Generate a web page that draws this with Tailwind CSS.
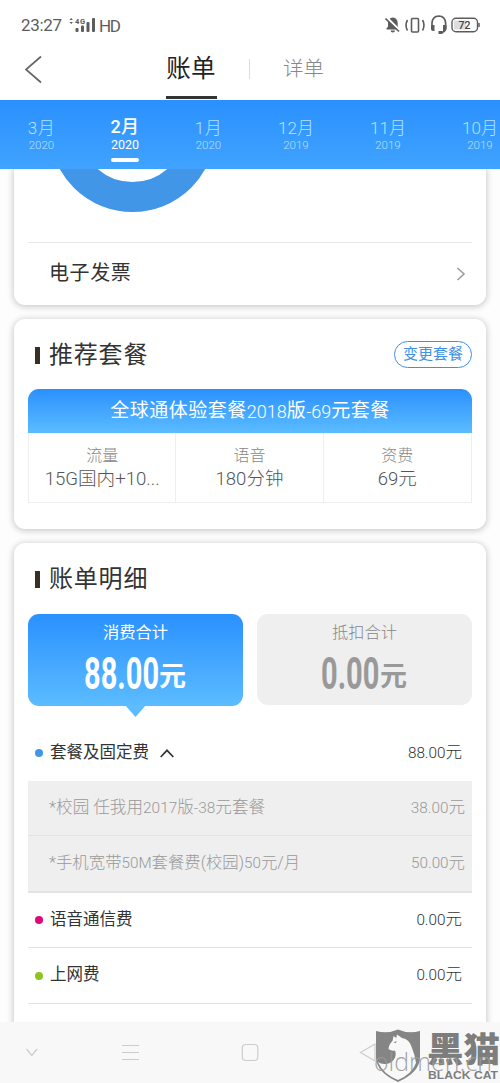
<!DOCTYPE html>
<html lang="zh-CN">
<head>
<meta charset="utf-8">
<title>账单</title>
<script src="https://cdn.jsdelivr.net/npm/@tailwindcss/browser@4"></script>
</head>
<body class="w-[500px] h-[1083px] overflow-hidden bg-white font-['Roboto','Noto_Sans_CJK_SC',sans-serif] font-light text-[#333] whitespace-nowrap">
<div class="relative flex flex-col w-[500px] h-[1083px] overflow-hidden">

  <!-- status bar -->
  <div class="flex h-[50px] shrink-0 items-center justify-between pl-[21px] pr-[20px] text-[#5c5c5c] font-normal">
    <div class="flex items-center">
      <span class="w-[42px] text-[17px] tracking-[-0.35px] leading-5">23:27</span>
      <svg class="ml-[5px] w-[30px] h-[18px]" viewBox="0 0 30 18" fill="#5c5c5c">
        <path d="M1.500 4 3.200 2l1.700 2zM1.500 6h3.400L3.200 8z"/>
        <text x="7" y="7.500" font-size="7.500" font-weight="700" font-family="Roboto" textLength="10">4G</text>
        <rect x="7.500" y="12" width="3" height="4" rx="1"/><rect x="13" y="9.500" width="3" height="6.500" rx="1"/><rect x="18.500" y="6" width="3" height="10" rx="1"/><rect x="24" y="2" width="3" height="14" rx="1"/>
      </svg>
      <span class="ml-[1px] pt-[1px] text-[17px] leading-5 tracking-[-1.500px]">HD</span>
    </div>
    <svg class="w-[95px] h-[22px]" viewBox="385 14 95 22" fill="none" stroke="#5c5c5c" stroke-width="1.600">
      <path d="M386.500 29.500v-1.300l1.500-1.400V23q0-5 4.800-5.600 4.900.6 4.900 5.600v4l1.400 1.400v1.100zM390.500 30.500h4.600q-.3 1.900-2.300 1.900t-2.300-1.900z" fill="#5c5c5c" stroke="none"/>
      <path d="M386.500 17.500l13 13" stroke="white" stroke-width="2.500"/><path d="M385.500 18.500l13.500 13"/>
      <rect x="411.500" y="18.500" width="7" height="13.500" rx="1"/><path d="M407.500 20q-3 5.300 0 10.500M422.500 20q3 5.300 0 10.500"/>
      <path d="M432 28v-5q.5-6.800 6.800-7 6.300.2 6.800 7v5q0 4.500-5.500 4.700" stroke-width="1.700"/>
      <path d="M431 25h3.500v6H433q-2 0-2-2zM443 25h3.500v4q0 2-2 2H443zM438.500 31h4v3h-4z" fill="#5c5c5c" stroke="none"/>
      <rect x="454" y="20.500" width="12" height="9" fill="#ddd" stroke="none"/>
      <rect x="452" y="18.300" width="25.500" height="13.500" rx="4" stroke-width="1.400"/><path d="M479 23v4" stroke-width="1.500"/>
      <text x="458.500" y="29" textLength="12" font-size="10.500" font-weight="500" font-family="Roboto" fill="#444" stroke="none">72</text>
    </svg>
  </div>

  <!-- page tabs -->
  <div class="flex h-[50px] shrink-0">
    <div class="w-[165px] pt-[5px] pl-[24px]"><svg class="w-[19px] h-[29px]" viewBox="0 0 19 29" fill="none" stroke="#666" stroke-width="1.700"><path d="M17 1.500 2 14.500 17 27.500"/></svg></div>
    <div class="flex w-[52px] flex-col items-center justify-between">
      <span class="pt-[4px] text-[24.500px] leading-[30px] tracking-[0.300px] font-normal text-[#222]">账单</span>
      <span class="mb-[1px] h-[3px] w-[51px] bg-[#333]"></span>
    </div>
    <div class="mt-[9px] ml-[32px] h-[20px] w-px bg-[#ddd]"></div>
    <span class="ml-[33px] pt-[5px] text-[20.500px] leading-[28px] text-[#888]">详单</span>
  </div>

  <!-- months -->
  <div class="z-10 flex h-[69px] shrink-0 bg-linear-to-b from-[#2a90fe] to-[#40a3ff] text-[#b5e1ff]">
    <div class="flex w-[83px] shrink-0 flex-col items-center pt-[18px]"><span class="text-[17px] leading-[20px] tracking-[0.500px]">3月</span><span class="text-[11.500px] leading-[14px]">2020</span></div>
    <div class="flex w-[84px] shrink-0 flex-col items-center pt-[17px] text-white"><span class="text-[18px] leading-[20px] font-medium tracking-[0.500px]">2月</span><span class="text-[12.500px] leading-[16px] font-normal">2020</span><span class="mt-[5px] h-[4px] w-[28px] rounded-full bg-white"></span></div>
    <div class="flex w-[83px] shrink-0 flex-col items-center pt-[18px]"><span class="text-[17px] leading-[20px] tracking-[0.500px]">1月</span><span class="text-[11.500px] leading-[14px]">2020</span></div>
    <div class="flex w-[92px] shrink-0 flex-col items-center pt-[18px]"><span class="text-[17px] leading-[20px]">12月</span><span class="text-[11.500px] leading-[14px]">2019</span></div>
    <div class="flex w-[92px] shrink-0 flex-col items-center pt-[18px]"><span class="text-[17px] leading-[20px]">11月</span><span class="text-[11.500px] leading-[14px]">2019</span></div>
    <div class="flex w-[92px] shrink-0 flex-col items-center pt-[18px]"><span class="text-[17px] leading-[20px]">10月</span><span class="text-[11.500px] leading-[14px]">2019</span></div>
  </div>

  <!-- cards -->
  <div class="flex h-[853px] shrink-0 flex-col gap-[14px] overflow-hidden bg-[#fdfdfd] px-[14px]">
    <section class="h-[136px] shrink-0 rounded-b-[11px] bg-white px-[14px] shadow-[0_1px_6px_1px_rgba(0,0,0,0.2)]">
      <svg class="block h-[73px] w-full" viewBox="28 169 444 73"><circle cx="132.500" cy="129" r="68" fill="none" stroke="#4196e8" stroke-width="30"/></svg>
      <div class="flex h-[62px] items-center justify-between border-t border-[#e8e8e8] pl-[21px] pr-[6px] pb-[1px]">
        <span class="text-[20px] tracking-[0.600px] font-normal">电子发票</span>
        <svg class="mt-[2px] h-[14px] w-[10px]" viewBox="0 0 10 14" fill="none" stroke="#999" stroke-width="1.500"><path d="M1.500 1 8 7l-6.500 6"/></svg>
      </div>
    </section>

    <section class="h-[210px] shrink-0 rounded-[11px] bg-white px-[14px] shadow-[0_1px_6px_1px_rgba(0,0,0,0.2)]">
      <div class="flex h-[70px] items-center">
        <span class="ml-[7px] mt-[3px] h-[17px] w-[5px] bg-[#393025]"></span>
        <span class="ml-[9px] pt-[2px] text-[24px] tracking-[0.800px] font-normal">推荐套餐</span>
        <span class="ml-auto flex h-[27px] w-[78px] items-center justify-center rounded-full border border-[#3d91e6] pt-[1px] text-[15px] text-[#3d91e6] font-normal">变更套餐</span>
      </div>
      <div class="flex h-[44px] items-center justify-center rounded-t-[11px] bg-linear-to-b from-[#2a90fe] to-[#5bbcff] pt-[1px] text-[19px] tracking-[0.500px] text-white font-normal">全球通体验套餐<span class="text-[18px] font-light tracking-normal">2018</span>版<span class="text-[18px] font-light tracking-normal">-69</span>元套餐</div>
      <div class="grid h-[70px] grid-cols-3 divide-x divide-[#eee] border border-t-0 border-[#eee] text-center">
        <div class="pt-[13px]"><div class="text-[16px] leading-5 text-[#888]">流量</div><div class="mt-[1px] text-[18.600px] leading-6 text-[#555]">15G国内+10...</div></div>
        <div class="pt-[13px]"><div class="text-[16px] leading-5 text-[#888]">语音</div><div class="mt-[1px] text-[18.500px] leading-6 text-[#555]">180分钟</div></div>
        <div class="pt-[13px]"><div class="text-[16px] leading-5 text-[#888]">资费</div><div class="mt-[1px] text-[18.500px] leading-6 text-[#555]">69元</div></div>
      </div>
    </section>

    <section class="h-[500px] shrink-0 rounded-t-[11px] bg-white px-[14px] shadow-[0_1px_6px_1px_rgba(0,0,0,0.2)]">
      <div class="flex h-[71px] items-center">
        <span class="ml-[7px] mt-[2px] h-[17px] w-[5px] bg-[#393025]"></span>
        <span class="ml-[9px] text-[24px] tracking-[0.800px] font-normal">账单明细</span>
      </div>
      <div class="flex h-[111px] gap-[14px]">
        <div class="relative h-[92px] w-[215px] rounded-[11px] bg-linear-to-b from-[#2a90fe] to-[#5bbcff] text-white">
          <div class="pt-[9px] text-center text-[16.300px] leading-5 font-normal">消费合计</div>
          <div class="mt-[7px] flex h-[48px] items-center pl-[56px]"><div class="w-[75px]"><span class="inline-block origin-left scale-x-[0.645] text-[45px] leading-[48px] font-bold">88.00</span></div><span class="pt-[6px] text-[27px] leading-[40px] font-bold">元</span></div>
          <svg class="absolute left-[97px] top-[91px] h-[12px] w-[21px]" viewBox="0 0 21 12"><path d="M0 0h21L10.500 12z" fill="#5bbcff"/></svg>
        </div>
        <div class="h-[91px] w-[215px] rounded-[11px] bg-[#efefef] text-[#999]">
          <div class="pt-[9px] text-center text-[16.300px] leading-5 text-[#888]">抵扣合计</div>
          <div class="mt-[7px] flex h-[48px] items-center pl-[64px]"><div class="w-[59px]"><span class="inline-block origin-left scale-x-[0.645] text-[45px] leading-[48px] font-bold">0.00</span></div><span class="pt-[6px] text-[27px] leading-[40px] font-bold">元</span></div>
        </div>
      </div>
      <div class="flex h-[56px] items-center pl-[7px] pr-[10px] text-[16.500px]">
        <span class="mr-[7px] size-[8px] rounded-full bg-[#4196e8]"></span><span class="font-normal">套餐及固定费</span>
        <svg class="ml-[11px] h-[9px] w-[14px]" viewBox="0 0 14 9" fill="none" stroke="#333" stroke-width="1.700"><path d="M.7 8 7 1.300 13.300 8"/></svg>
        <span class="ml-auto"><span class="text-[15.300px]">88.00</span>元</span>
      </div>
      <div class="flex h-[55px] items-center justify-between border-b border-[#e2e2e2] bg-[#efefef] pl-[21px] pr-[7px] text-[16.600px] text-[#999]"><span>*校园 任我用<span class="text-[15.400px]">2017</span>版<span class="text-[15.400px]">-38</span>元套餐</span><span><span class="text-[15.300px]">38.00</span>元</span></div>
      <div class="flex h-[57px] items-center justify-between border-b-2 border-[#e2e2e2] bg-[#efefef] pl-[21px] pr-[7px] text-[16.400px] text-[#999]"><span>*手机宽带<span class="text-[15.200px]">50M</span>套餐费(校园)<span class="text-[15.200px]">50</span>元/月</span><span><span class="text-[15.300px]">50.00</span>元</span></div>
      <div class="flex h-[55px] items-center border-b border-[#e2e2e2] pl-[7px] pr-[10px] text-[16.500px]"><span class="mr-[7px] size-[8px] rounded-full bg-[#e3057b]"></span><span class="font-normal">语音通信费</span><span class="ml-auto"><span class="text-[15.300px]">0.00</span>元</span></div>
      <div class="flex h-[56px] items-center border-b border-[#e2e2e2] pl-[7px] pr-[10px] text-[16.500px]"><span class="mr-[7px] size-[8px] rounded-full bg-[#8fc31f]"></span><span class="font-normal">上网费</span><span class="ml-auto"><span class="text-[15.300px]">0.00</span>元</span></div>
    </section>
  </div>

  <!-- system navigation -->
  <div class="z-10 h-[61px] shrink-0 bg-[#f8f8f8]">
    <svg class="block h-[61px] w-[500px]" viewBox="0 1022 500 61" fill="none" stroke="#ccc" stroke-width="1.200">
      <path d="M26.500 1049l5.300 6.500 5.300-6.500M122 1045.500h17M122 1052.500h17M122 1059.500h17"/><rect x="242.300" y="1044.500" width="15.500" height="16" rx="3.500"/><path d="M375 1044l-14.500 8.500 14.500 8.500z"/>
    </svg>
  </div>

  <!-- overlaid brand mark -->
  <svg class="absolute left-[360px] top-[1020px] z-20 h-[63px] w-[140px]" viewBox="360 1020 140 63">
    <path d="M376 1031q12 3 22-1.500 10 4.500 22 1.500v26q0 15-22 25-22-10-22-25z" fill="#858585"/>
    <path d="M378 1062q5 12 20 18 14-6 18-17-1-8-4-15-2.500-9-10-10l-5-3.500-.7 3.500-2.800-2-1 5q-3.500 3-4 8 3 2.500 6.500 1.500 2 5-1.500 9.500-4 4.500-9 4-4 0-6.500-2z" fill="#f8f8f8"/>
    <path d="M393.500 1042.500l3-1.500-.5 2z" fill="#858585"/>
    <text x="427" y="1062" textLength="73" lengthAdjust="spacingAndGlyphs" font-family="Noto Sans CJK SC" font-size="34" font-weight="900" fill="#7d7d7d">黑猫</text>
    <text x="374" y="1071" textLength="118" lengthAdjust="spacingAndGlyphs" font-family="Open Sans" font-size="25" fill="#999" fill-opacity=".9">oldmen.cn</text>
    <text x="428" y="1079" textLength="70" lengthAdjust="spacingAndGlyphs" font-family="Liberation Sans" font-size="10.500" font-weight="700" fill="#7d7d7d">BLACK CAT</text>
  </svg>
</div>
</body>
</html>
